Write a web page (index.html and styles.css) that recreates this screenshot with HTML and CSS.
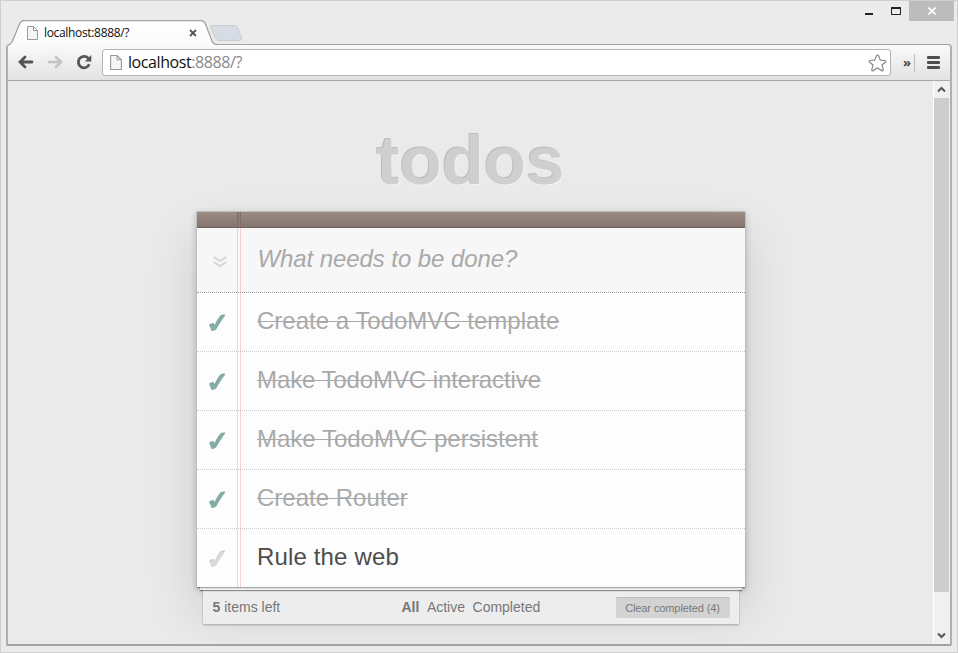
FILE: index.html
```html
<!DOCTYPE html>
<html lang="en">
<head>
<meta charset="utf-8">
<title>localhost:8888/?</title>
<link rel="stylesheet" href="styles.css">
</head>
<body>
<svg class="defs" width="0" height="0">
  <defs>
    <symbol id="page" viewBox="0 0 11 14"><path d="M.5.5h6l4 4v9H.5zM6.500.5v4h4" fill="#f5f5f5" stroke="#999"/></symbol>
    <symbol id="check" viewBox="0 0 18 18"><path d="M1.200 11.500Q3 10 5.500 10L6.500 12.200C8.500 8 10.500 4.500 13 2Q15 1.300 17.300 1.600C13.500 6.500 10.500 11 8 15.800Q5.500 17.200 3.200 16.800Q3 14 1.200 11.500z"/></symbol>
  </defs>
</svg>
<div class="window">
  <div class="titlebar">
    <div class="tab">
      <svg class="tab-shape" width="240" height="27" viewBox="0 0 240 27">
        <defs><linearGradient id="tg" x2="0" y2="1"><stop offset="0" stop-color="#fff"/><stop offset="1" stop-color="#fafafa"/></linearGradient></defs>
        <path d="M0 27V25.500Q3 24.500 4.500 21L11.500 4Q13 .5 16 .5H193Q196 .5 197.500 4L204 21Q205.500 24.500 209 24.500V27z" fill="url(#tg)"/>
        <path d="M0 25.500Q3 24.500 4.500 21L11.500 4Q13 .5 16 .5H193Q196 .5 197.500 4L204 21Q205.500 24.500 209 24.500" fill="none" stroke="#a3a3a3" stroke-width="1.300"/>
        <path d="M204 5.500H226Q229 5.500 230 8.500L233.500 18Q234 20.500 231.500 20.500H211Q208.500 20.500 207.500 18L203 8Q202 5.500 204 5.500z" fill="#d7dce4" stroke="#cacccf"/>
      </svg>
      <svg class="page-icon" width="11" height="14"><use href="#page"/></svg>
      <span class="tab-title">localhost:8888/?</span>
      <svg class="tab-close" width="8" height="8" viewBox="0 0 8 8"><path d="M1 1l6 6M7 1L1 7" stroke="#555" stroke-width="1.800"/></svg>
    </div>
    <div class="controls">
      <span class="minimize"></span>
      <span class="maximize"></span>
      <span class="close"><svg width="8" height="8" viewBox="0 0 8 8"><path d="M.5.5l7 7M7.500.5l-7 7" stroke="#fff" stroke-width="1.600"/></svg></span>
    </div>
  </div>
  <div class="browser">
    <div class="toolbar">
      <svg class="back" width="16" height="14" viewBox="0 0 16 14"><path d="M2 7H14M7 2L2 7l5 5" fill="none" stroke="#555" stroke-width="2.800" stroke-linecap="round"/></svg>
      <svg class="forward" width="16" height="14" viewBox="0 0 16 14"><path d="M14 7H2M9 2L14 7l-5 5" fill="none" stroke="#c4c4c4" stroke-width="2.600" stroke-linecap="round"/></svg>
      <svg class="reload" width="16" height="16" viewBox="0 0 16 16"><path d="M12.300 4.300A5.700 5.700 0 1 0 13.300 10.300" fill="none" stroke="#555" stroke-width="2.800"/><path d="M15.300 1v6.500H8.800z" fill="#555"/></svg>
      <div class="address">
        <svg width="12" height="15"><use href="#page"/></svg>
        <span class="url">localhost<span class="port">:8888/?</span></span>
        <svg class="star" width="19" height="18" viewBox="0 0 19 18"><path d="M9.500 1Q10.300 1 10.700 2L12.300 6.200L17 6.500Q18.600 6.900 17.500 8L14 11L15.200 15.500Q15.400 17.300 13.800 16.600L9.500 14L5.200 16.600Q3.600 17.300 3.800 15.500L5 11L1.500 8Q.4 6.900 2 6.500L6.700 6.200L8.300 2Q8.700 1 9.500 1z" fill="#fff" stroke="#888" stroke-width="1.200"/></svg>
      </div>
      <span class="more">»</span>
      <span class="divider"></span>
      <span class="menu"><i></i><i></i><i></i></span>
    </div>
    <div class="viewport">
      <main class="page">
        <h1>todos</h1>
        <section class="todoapp">
          <div class="bar"></div>
          <div class="entry">
            <svg class="toggle-all" width="14" height="12" viewBox="0 0 14 12"><path d="M.7 1.200L7 5l6.300-3.800M.7 6.200L7 10l6.300-3.800" fill="none" stroke="#d6d6d6" stroke-width="2"/></svg>
            <span>What needs to be done?</span>
          </div>
          <ul class="list">
            <li class="done"><svg class="check" width="18" height="18"><use href="#check"/></svg><span>Create a TodoMVC template</span></li>
            <li class="done"><svg class="check" width="18" height="18"><use href="#check"/></svg><span class="snug">Make TodoMVC interactive</span></li>
            <li class="done"><svg class="check" width="18" height="18"><use href="#check"/></svg><span>Make TodoMVC persistent</span></li>
            <li class="done"><svg class="check" width="18" height="18"><use href="#check"/></svg><span>Create Router</span></li>
            <li><svg class="check" width="18" height="18"><use href="#check"/></svg><span class="loose">Rule the web</span></li>
          </ul>
          <div class="stack"></div>
          <div class="margin-lines"></div>
        </section>
        <footer class="footer">
          <span class="count"><b>5</b> items left</span>
          <nav class="filters"><b>All</b><span>Active</span><span>Completed</span></nav>
          <button class="clear">Clear completed (4)</button>
        </footer>
      </main>
      <div class="scrollbar">
        <svg width="9" height="7" viewBox="0 0 9 7"><path d="M1 5.500L4.500 2L8 5.500" fill="none" stroke="#555" stroke-width="2"/></svg>
        <div class="thumb"></div>
        <svg class="down" width="9" height="7" viewBox="0 0 9 7"><path d="M1 1.500L4.500 5L8 1.500" fill="none" stroke="#555" stroke-width="2"/></svg>
      </div>
    </div>
  </div>
</div>
</body>
</html>
```
FILE: styles.css
```css
* { box-sizing: border-box; }
body { margin: 0; font-family: "Liberation Sans", Arial, sans-serif; overflow: hidden; }
svg { display: block; flex: none; }
.defs { position: absolute; }

.window { width: 958px; height: 653px; background: #ebebeb; border: 1px solid #cfcfcf; padding: 0 5px 6px; display: flex; flex-direction: column; }
.titlebar { height: 43px; display: flex; justify-content: space-between; }
.tab { position: relative; z-index: 2; display: flex; align-items: center; width: 240px; height: 27px; margin-top: 19px; padding-left: 21px; }
.tab-shape { position: absolute; left: 2px; top: 0; }
.page-icon { position: relative; margin-top: -1px; }
.tab-title { position: relative; width: 145px; margin-left: 6px; margin-top: -2px; font: 12px "Open Sans", sans-serif; letter-spacing: -0.33px; white-space: nowrap; color: #111; }
.tab-close { position: relative; margin-top: -1px; }
.controls { display: flex; align-items: flex-start; margin-right: -2px; }
.minimize { width: 8px; height: 2px; margin: 12px 18px 0 0; background: #222; }
.maximize { width: 10px; height: 8px; margin: 6px 8px 0 0; border: 1px solid #222; border-top-width: 2px; }
.close { display: flex; align-items: center; justify-content: center; width: 45px; height: 20px; background: #bcbcbc; }

.browser { flex: 1; min-height: 0; display: flex; flex-direction: column; border: 1px solid #a0a0a0; border-width: 1px 2px 2px; border-color: #a3a3a3 #b0b0b0 #a3a3a3 #b0b0b0; border-radius: 4px 4px 2px 2px; }
.toolbar { height: 36px; flex: none; display: flex; align-items: center; padding-left: 10px; background: linear-gradient(#fafafa, #e2e2e2); border-bottom: 1px solid #a8a8a8; border-radius: 3px 3px 0 0; }
.back, .forward, .reload { margin-top: -1px; }
.forward { margin-left: 13px; }
.reload { margin-left: 13px; }
.address { display: flex; align-items: center; width: 789px; height: 27px; margin-left: 10px; padding: 0 3px 0 7px; background: #fff; border: 1px solid #b3b3b3; border-radius: 3px; }
.url { flex: 1; margin-left: 6px; margin-top: -1px; font: 16px/24px "Open Sans", sans-serif; letter-spacing: -0.42px; color: #111; }
.port { color: #888; }
.more { width: 12px; margin-left: 12px; margin-top: -1px; font: bold 13px "Open Sans", sans-serif; color: #444; }
.divider { width: 1px; height: 18px; margin-left: -1px; background: #bbb; }
.menu { width: 13px; margin-left: 12px; display: grid; gap: 2px; }
.menu i { height: 3px; background: #4e4e4e; border-radius: 1px; }

.viewport { flex: 1; min-height: 0; display: flex; background: #eaeaea; }
.page { flex: 1; overflow: hidden; display: flex; flex-direction: column; align-items: center; }
h1 { margin: 40px 0 10px; height: 80px; font-size: 69px; line-height: 80px; color: #cfcfcf; text-shadow: -1px -1px 0 #bdbdbd, 1px 1px 0 #f2f2f2; }
.todoapp { position: relative; flex: none; width: 550px; height: 377px; background: #fdfdfd; border: 1px solid #bfbfbf; border-radius: 2px 2px 0 0; box-shadow: 0 2px 6px rgba(0,0,0,.2), 0 25px 50px rgba(0,0,0,.13); }
.bar { height: 16px; background: linear-gradient(#9d8b83, #847670); border-bottom: 1px solid #6c615c; }
.entry { display: flex; align-items: center; height: 64px; padding-left: 16px; background: #f7f7f7; font-size: 24px; font-style: italic; color: #a9a9a9; }
.entry span { margin-left: 31px; margin-top: -2px; letter-spacing: -0.08px; }
.toggle-all { margin-top: 3px; }
.list { margin: 0; padding: 0; list-style: none; }
.list li { display: flex; align-items: center; height: 59px; padding-left: 11px; border-top: 1px dotted #ccc; font-size: 24px; color: #4d4d4d; }
.list li:first-child { border-top-color: #999; }
.list li span { margin-left: 31px; margin-top: -2px; text-indent: 0.5px; }
.list li .snug { letter-spacing: -0.1px; }
.list li .loose { letter-spacing: 0.15px; }
.list .done { color: #a9a9a9; }
.done span { text-decoration: line-through; text-decoration-thickness: 1px; }
.check { position: relative; z-index: 2; margin-top: 2px; fill: #d9d9d9; filter: drop-shadow(0 -1px 0 #c4c4c4); }
.done .check { fill: #85ada7; filter: drop-shadow(0 -1px 0 #77a19b); }
.stack { position: absolute; left: 0; right: 0; bottom: 0; height: 50px; box-shadow: 0 1px 1px rgba(0,0,0,.3), 0 3px 0 -3px #eee, 0 6px 0 -3px #eee, 0 7px 1px -3px rgba(0,0,0,.4), 0 43px 0 -6px #ededed, 0 44px 2px -6px rgba(0,0,0,.3); }
.margin-lines { position: absolute; top: 0; bottom: 0; left: 40px; width: 4px; border: 1px solid rgba(240,100,100,.28); border-width: 0 1px; }
.margin-lines::before { content: ""; position: absolute; left: -1px; top: 0; width: 4px; height: 15px; background: linear-gradient(90deg, #806b65 1px, #8e7d76 1px 3px, #806b65 3px); }
.footer { position: relative; display: flex; align-items: center; width: 536px; height: 38px; padding: 0 9px 0 10px; font-size: 14px; color: #777; }
.count { width: 189px; }
.filters { display: flex; gap: 7.5px; flex: 1; }
.clear { width: 114px; height: 21px; padding: 1px 0 0; border: 0; border-radius: 2px; background: #d3d3d3; box-shadow: inset 0 1px 0 #bdbdbd; font: 11px "Liberation Sans", Arial, sans-serif; letter-spacing: -0.1px; color: #777; }

.scrollbar { width: 17px; display: flex; flex-direction: column; align-items: center; padding: 5px 1px 5px 0; border-left: 1px solid #fff; background: #f0f0f0; }
.thumb { width: 15px; height: 494px; margin-top: 5px; background: #cdcdcd; }
.down { margin-top: auto; }
```
